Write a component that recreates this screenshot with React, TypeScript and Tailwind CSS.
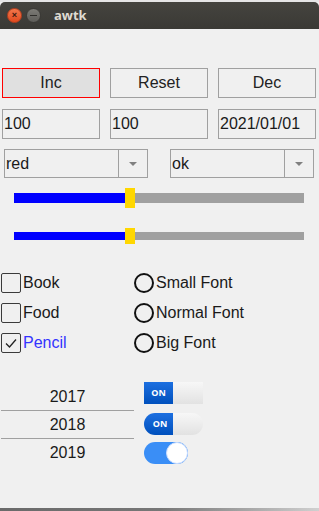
import React from 'react';

const font = { fontFamily: '"Liberation Sans", Arial, sans-serif' };

const Slider: React.FC<{ trackH: string; thumbH: string; className?: string }> = ({ trackH, thumbH, className = '' }) => (
  <div className={`flex items-center pl-[14px] pr-[15px] ${thumbH} ${className}`}>
    <div className={`w-[111px] ${trackH} bg-[#0000ff]`} />
    <div className={`w-[10px] ${thumbH} bg-[#ffd700]`} />
    <div className={`flex-1 ${trackH} bg-[#a0a0a0]`} />
  </div>
);

const Combo: React.FC<{ text: string; className?: string }> = ({ text, className = '' }) => (
  <div className={`flex h-[29px] w-[144px] border border-[#a0a0a0] ${className}`}>
    <div className="flex flex-1 items-center pl-[1px] text-[16px] text-[#1a1a1a]">{text}</div>
    <div className="flex w-[29px] items-center justify-center border-l border-[#a0a0a0]">
      <div className="h-0 w-0 border-x-[4px] border-t-[4px] border-x-transparent border-t-[#808080]" />
    </div>
  </div>
);

const Check: React.FC<{ label: string; checked?: boolean }> = ({ label, checked }) => (
  <div className="flex h-[20px] items-center">
    <div className="flex h-[20px] w-[20px] items-center justify-center rounded-[2px] border-[1.5px] border-[#3a3a3a]">
      {checked && (
        <svg width="14" height="14" viewBox="0 0 14 14" fill="none">
          <path d="M2 7.5 L5.5 11 L12 3.5" stroke="#222" strokeWidth="1.3" />
        </svg>
      )}
    </div>
    <span className={`ml-[2px] text-[16px] ${checked ? 'text-[#3333ff]' : 'text-[#1a1a1a]'}`}>{label}</span>
  </div>
);

const Radio: React.FC<{ label: string }> = ({ label }) => (
  <div className="flex h-[20px] items-center">
    <div className="h-[20px] w-[20px] rounded-full border-2 border-[#111]" />
    <span className="ml-[2px] text-[16px] text-[#1a1a1a]">{label}</span>
  </div>
);

export default function App() {
  return (
    <div className="flex h-[511px] w-[319px] flex-col bg-[#f0f0f0]" style={font}>
      {/* title bar */}
      <div className="h-[2px] bg-[#e6e6e6]" />
      <div className="flex h-[27px] items-center rounded-t-[5px] bg-gradient-to-b from-[#45443f] to-[#3a3935] pl-[7px]">
        <div className="flex h-[15px] w-[15px] items-center justify-center rounded-full border border-[#b8401f] bg-gradient-to-b from-[#f2764a] to-[#e2491c] text-[9px] font-bold leading-none text-[#3a1a10]">
          ×
        </div>
        <div className="ml-[4px] flex h-[15px] w-[15px] items-center justify-center rounded-full border border-[#3b3a36] bg-gradient-to-b from-[#7c7b76] to-[#5e5d59]">
          <div className="h-[1px] w-[7px] bg-[#2e2d2a]" />
        </div>
        <span className="ml-[13px] text-[13px] font-bold text-[#dfdbd2]" style={{ fontFamily: '"Open Sans", "Noto Sans", sans-serif' }}>awtk</span>
      </div>

      {/* buttons */}
      <div className="mt-[39px] flex gap-[10px] pl-[2px]">
        <div className="flex h-[30px] w-[98px] items-center justify-center border border-[#ff0000] bg-[#e0e0e0] text-[16px] text-[#222]">Inc</div>
        <div className="flex h-[30px] w-[98px] items-center justify-center border border-[#a0a0a0] text-[16px] text-[#222]">Reset</div>
        <div className="flex h-[30px] w-[98px] items-center justify-center border border-[#a0a0a0] text-[16px] text-[#222]">Dec</div>
      </div>

      {/* edits */}
      <div className="mt-[11px] flex gap-[10px] pl-[2px]">
        <div className="flex h-[30px] w-[98px] items-center border border-[#a0a0a0] pl-[1px] text-[16px] text-[#1a1a1a]">100</div>
        <div className="flex h-[30px] w-[98px] items-center border border-[#a0a0a0] pl-[1px] text-[16px] text-[#1a1a1a]">100</div>
        <div className="flex h-[30px] w-[98px] items-center border border-[#a0a0a0] pl-[1px] text-[16px] text-[#1a1a1a]">2021/01/01</div>
      </div>

      {/* combos */}
      <div className="mt-[10px] flex gap-[22px] pl-[4px]">
        <Combo text="red" />
        <Combo text="ok" />
      </div>

      {/* sliders */}
      <Slider trackH="h-[10px]" thumbH="h-[20px]" className="mt-[10px]" />
      <Slider trackH="h-[8px]" thumbH="h-[16px]" className="mt-[20px]" />

      {/* check / radio */}
      <div className="mt-[29px] flex pl-[1px]">
        <div className="flex w-[133px] flex-col gap-[10px]">
          <Check label="Book" />
          <Check label="Food" />
          <Check label="Pencil" checked />
        </div>
        <div className="flex flex-col gap-[10px]">
          <Radio label="Small Font" />
          <Radio label="Normal Font" />
          <Radio label="Big Font" />
        </div>
      </div>

      {/* list + switches */}
      <div className="mt-[30px] flex">
        <div className="ml-[1px] flex w-[133px] flex-col text-[16px] text-[#1a1a1a]">
          <div className="flex h-[28px] items-center justify-center border-b border-[#a0a0a0]">2017</div>
          <div className="flex h-[28px] items-center justify-center border-b border-[#a0a0a0]">2018</div>
          <div className="flex h-[28px] items-center justify-center">2019</div>
        </div>
        <div className="ml-[10px] flex flex-col">
          <div className="mt-[-1px] flex h-[22px] w-[59px] overflow-hidden">
            <div className="flex w-[29px] items-center justify-center bg-gradient-to-b from-[#1c6fe0] to-[#0050bd] text-[9px] font-bold text-white" style={{ fontFamily: '"Open Sans", sans-serif' }}>ON</div>
            <div className="flex-1 bg-gradient-to-b from-[#f7f7f7] to-[#e2e2e2]" />
          </div>
          <div className="mt-[9px] flex h-[22px] w-[59px] overflow-hidden rounded-full">
            <div className="flex w-[29px] items-center justify-center bg-gradient-to-b from-[#1c6fe0] to-[#0050bd] pl-[3px] text-[9px] font-bold text-white" style={{ fontFamily: '"Open Sans", sans-serif' }}>ON</div>
            <div className="flex-1 bg-gradient-to-b from-[#f7f7f7] to-[#e2e2e2]" />
          </div>
          <div className="mt-[7px] flex h-[22px] w-[44px] items-center justify-end rounded-full bg-[#3a8ef6]">
            <div className="h-[22px] w-[22px] rounded-full border border-[#c8dcff] bg-white" />
          </div>
        </div>
      </div>

      <div className="mt-auto h-[3px] bg-gradient-to-r from-[#6a6a6a] via-[#777] to-[#d0d0d0]" />
    </div>
  );
}
